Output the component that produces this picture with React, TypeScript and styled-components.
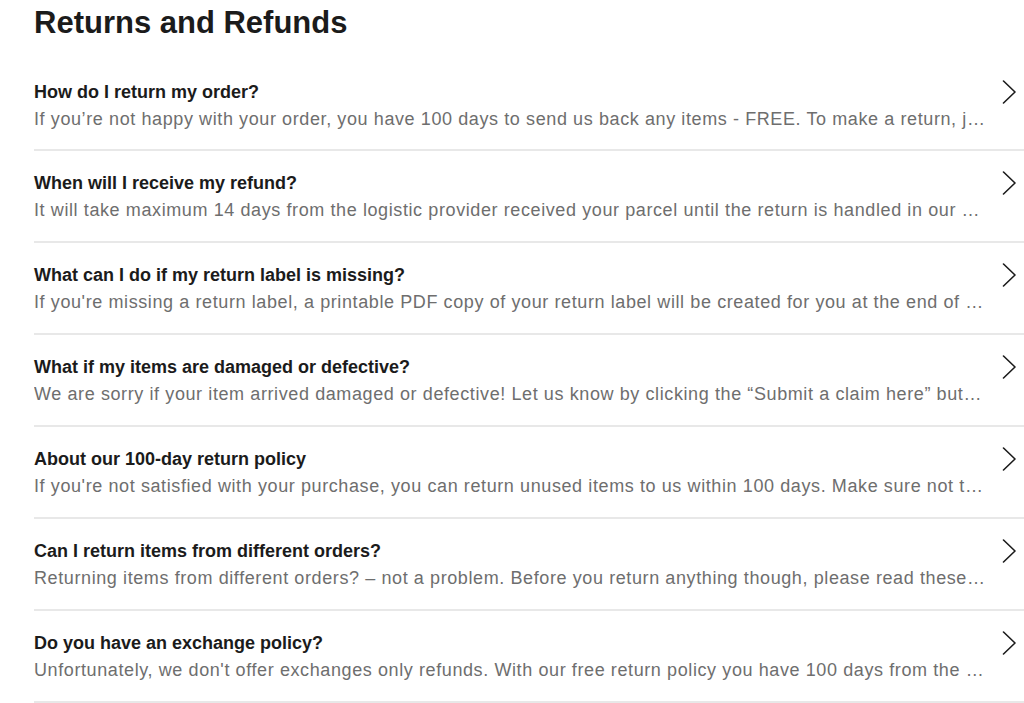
import React from "react";
import styled, { createGlobalStyle } from "styled-components";

const Global = createGlobalStyle`
  html, body { margin: 0; padding: 0; background: #ffffff; }
  body { font-family: "Liberation Sans", Arial, sans-serif; color: #1a1a1a; overflow: hidden; }
`;

const Page = styled.main`
  padding: 6px 0 0 34px;
  width: 990px;
`;

const Heading = styled.h1`
  margin: 0;
  font-size: 31px;
  line-height: 34px;
  font-weight: 700;
  color: #1b1b1b;
`;

const List = styled.ul`
  list-style: none;
  margin: 39px 0 0 0;
  padding: 0;
`;

const Row = styled.li`
  display: grid;
  grid-template-columns: minmax(0, 1fr) 24px;
  column-gap: 10px;
  align-items: start;
  padding: 19px 4px 17px 0;
  border-bottom: 2px solid #e8e8e8;
  cursor: pointer;
  &:first-child {
    padding-top: 0;
    padding-bottom: 16px;
  }
`;

const Texts = styled.div`
  min-width: 0;
  display: flex;
  flex-direction: column;
`;

const Question = styled.div`
  font-size: 18px;
  line-height: 26px;
  font-weight: 700;
  color: #1b1b1b;
`;

const Answer = styled.div`
  font-size: 18px;
  line-height: 28px;
  color: #6e6e6e;
  letter-spacing: 0.6px;
  white-space: nowrap;
  overflow: hidden;
  text-overflow: ellipsis;
`;

const Chevron = styled.svg`
  width: 24px;
  height: 24px;
  margin-top: 1px;
  display: block;
`;

const items = [
  {
    q: "How do I return my order?",
    a: "If you’re not happy with your order, you have 100 days to send us back any items - FREE. To make a return, just go to your account and select the order you want to return.",
  },
  {
    q: "When will I receive my refund?",
    a: "It will take maximum 14 days from the logistic provider received your parcel until the return is handled in our warehouse and refunded.",
  },
  {
    q: "What can I do if my return label is missing?",
    a: "If you're missing a return label, a printable PDF copy of your return label will be created for you at the end of the return registration.",
  },
  {
    q: "What if my items are damaged or defective?",
    a: "We are sorry if your item arrived damaged or defective! Let us know by clicking the “Submit a claim here” button below.",
  },
  {
    q: "About our 100-day return policy",
    a: "If you're not satisfied with your purchase, you can return unused items to us within 100 days. Make sure not to remove any tags.",
  },
  {
    q: "Can I return items from different orders?",
    a: "Returning items from different orders? – not a problem. Before you return anything though, please read these instructions.",
  },
  {
    q: "Do you have an exchange policy?",
    a: "Unfortunately, we don't offer exchanges only refunds. With our free return policy you have 100 days from the delivery date.",
  },
];

export default function App() {
  return (
    <>
      <Global />
      <Page>
        <Heading>Returns and Refunds</Heading>
        <List>
          {items.map((it) => (
            <Row key={it.q}>
              <Texts>
                <Question>{it.q}</Question>
                <Answer>{it.a}</Answer>
              </Texts>
              <Chevron viewBox="0 0 24 24" fill="none">
                <path d="M7.5 1 L19 12 L7.5 23" stroke="#1b1b1b" strokeWidth="1.6" strokeLinecap="round" strokeLinejoin="round" />
              </Chevron>
            </Row>
          ))}
        </List>
      </Page>
    </>
  );
}
